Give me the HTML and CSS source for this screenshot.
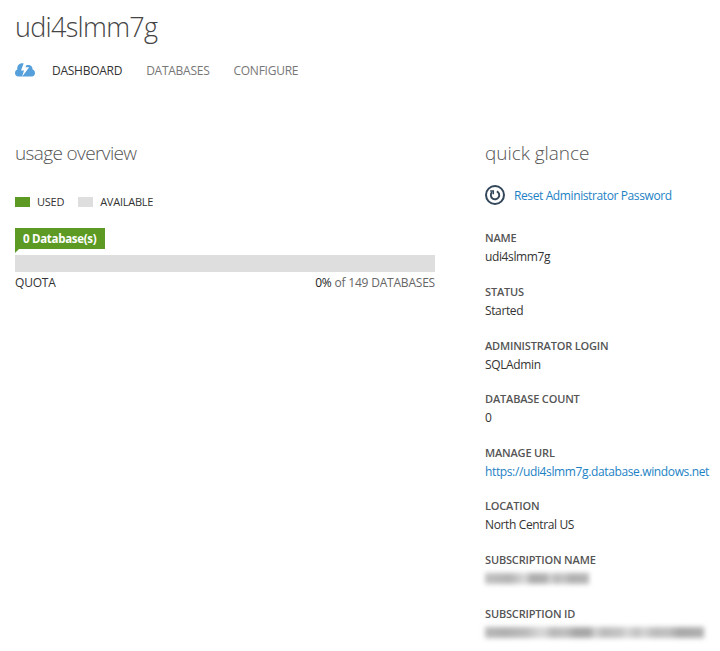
FILE: index.html
```html
<!DOCTYPE html>
<html lang="en">
<head>
<meta charset="utf-8">
<title>udi4slmm7g</title>
<link rel="stylesheet" href="styles.css">
</head>
<body>
<header>
  <h1>udi4slmm7g</h1>
  <nav class="tabs">
    <svg class="cloud" width="20" height="14" viewBox="0 0 20 14" aria-hidden="true">
      <path fill="#559fdb" d="M3.500 13.500A3.600 3.600 0 0 1 0 10C0 8 1 6.900 2.300 6.500C1.900 2.800 4 .3 7.400.3C10 .3 10.800 1.600 11.500 2.400C14.300 1 17.800 2.800 17.500 6.300C19.200 7 20 8.400 20 10C20 12 18.600 13.500 16.800 13.500Z"/>
      <path fill="#fff" d="M8.800 0H11.700L10.600 4.200H14.200L7 13.800L9 7.500H6Z"/>
    </svg>
    <a class="active">DASHBOARD</a>
    <a>DATABASES</a>
    <a>CONFIGURE</a>
  </nav>
</header>
<main>
  <section class="usage">
    <h2>usage overview</h2>
    <div class="legend">
      <i class="swatch used"></i><span class="l-used">USED</span>
      <i class="swatch"></i><span>AVAILABLE</span>
    </div>
    <div class="flag">0 Database(s)</div>
    <div class="bar"></div>
    <div class="quota"><span>QUOTA</span><span class="q-value"><b>0%</b> of 149 DATABASES</span></div>
  </section>
  <section class="glance">
    <h2>quick glance</h2>
    <a class="reset">
      <svg width="20" height="20" viewBox="0 0 20 20" fill="none" stroke="#33475b" aria-hidden="true">
        <circle cx="10" cy="10" r="9" stroke-width="2"/>
        <path d="M11.800 6.300A4.200 4.200 0 1 1 7 7.200" stroke-width="1.900"/>
        <path d="M5.200 6H8.300V9.300" stroke-width="1.500"/>
      </svg>
      <span>Reset Administrator Password</span>
    </a>
    <dl>
      <div><dt>NAME</dt><dd>udi4slmm7g</dd></div>
      <div><dt>STATUS</dt><dd>Started</dd></div>
      <div><dt>ADMINISTRATOR LOGIN</dt><dd>SQLAdmin</dd></div>
      <div><dt>DATABASE COUNT</dt><dd>0</dd></div>
      <div><dt>MANAGE URL</dt><dd><a>https://udi4slmm7g.database.windows.net</a></dd></div>
      <div><dt>LOCATION</dt><dd>North Central US</dd></div>
      <div><dt>SUBSCRIPTION NAME</dt><dd><span class="redacted short"></span></dd></div>
      <div><dt>SUBSCRIPTION ID</dt><dd><span class="redacted long"></span></dd></div>
    </dl>
  </section>
</main>
</body>
</html>
```
FILE: styles.css
```css
* { box-sizing: border-box; }
body {
  margin: 0;
  padding: 0 0 0 15px;
  height: 651px;
  overflow: hidden;
  background: #fff;
  color: #333;
  font: 12px/18px "Open Sans", "Noto Sans", sans-serif;
  white-space: nowrap;
}
h1, h2, dl, dd { margin: 0; font-weight: 300; }
h1 { padding-top: 8px; font-size: 27px; line-height: 37px; letter-spacing: -0.7px; color: #444; }
.tabs { display: flex; align-items: center; height: 18px; margin-top: 17px; color: #777; letter-spacing: -0.26px; }
.cloud { margin-right: 17px; margin-bottom: 2px; }
.tabs a { margin-right: 24px; }
.tabs .active { color: #333; }
main { display: flex; margin-top: 59px; }
.usage { flex: none; width: 420px; margin-right: 50px; }
.glance { flex: none; width: 235px; }
h2 { height: 28px; font-size: 19px; line-height: 28px; letter-spacing: -0.63px; color: #555; }
.glance h2 { letter-spacing: -0.05px; }
.legend { display: flex; align-items: center; height: 18px; margin-top: 26px; font-size: 11px; letter-spacing: -0.25px; }
.swatch { width: 15px; height: 10px; margin-right: 7px; background: #dedede; }
.used { background: #5c9a23; }
.l-used { margin-right: 14px; }
.flag {
  width: 90px; height: 25px; margin-top: 17px; padding-left: 8px;
  background: #5c9a23; color: #fff; font-weight: 700; font-size: 11.5px; line-height: 21px; letter-spacing: -0.3px;
  clip-path: polygon(0 0, 100% 0, 100% 21px, 4px 21px, 0 25px);
}
.bar { height: 17px; margin-top: 2px; background: #dedede; }
.quota { display: flex; justify-content: space-between; margin-top: 2px; letter-spacing: -0.2px; }
.q-value { color: #666; }
.q-value b { font-weight: 400; color: #222; }
.reset { display: flex; align-items: center; height: 20px; margin-top: 18px; color: #1c82c5; letter-spacing: -0.39px; }
.reset span { margin-left: 9px; padding-top: 2px; }
dl { margin-top: 24.22px; }
dl > div { height: 53.65px; }
dt { font-size: 11px; font-weight: 600; line-height: 18px; letter-spacing: -0.17px; color: #555; }
dd { height: 19px; font-weight: 400; line-height: 20px; letter-spacing: -0.37px; }
dd a { color: #1c82c5; }
.redacted { display: block; height: 11px; margin-top: 4px; filter: blur(2.5px); }
.short {
  width: 104px;
  background: linear-gradient(90deg, #c0c0c0 0, #b4b4b4 25px, #d0d0d0 36px, #dcdcdc 40px, #acacac 46px, #b0b0b0 61px, #d4d4d4 65px, #b8b8b8 72px, #c8c8c8 78px, #b0b0b0 86px, #b6b6b6 104px);
}
.long {
  width: 219px;
  background: linear-gradient(90deg, #b8b8b8 0, #b0b0b0 20px, #bcbcbc 42px, #d6d6d6 54px, #d6d6d6 60px, #b8b8b8 67px, #c0c0c0 81px, #a6a6a6 91px, #a8a8a8 105px, #d4d4d4 110px, #bababa 119px, #c6c6c6 137px, #dadada 142px, #c0c0c0 152px, #d6d6d6 159px, #bcbcbc 169px, #c0c0c0 184px, #a8a8a8 194px, #b0b0b0 219px);
}
```
